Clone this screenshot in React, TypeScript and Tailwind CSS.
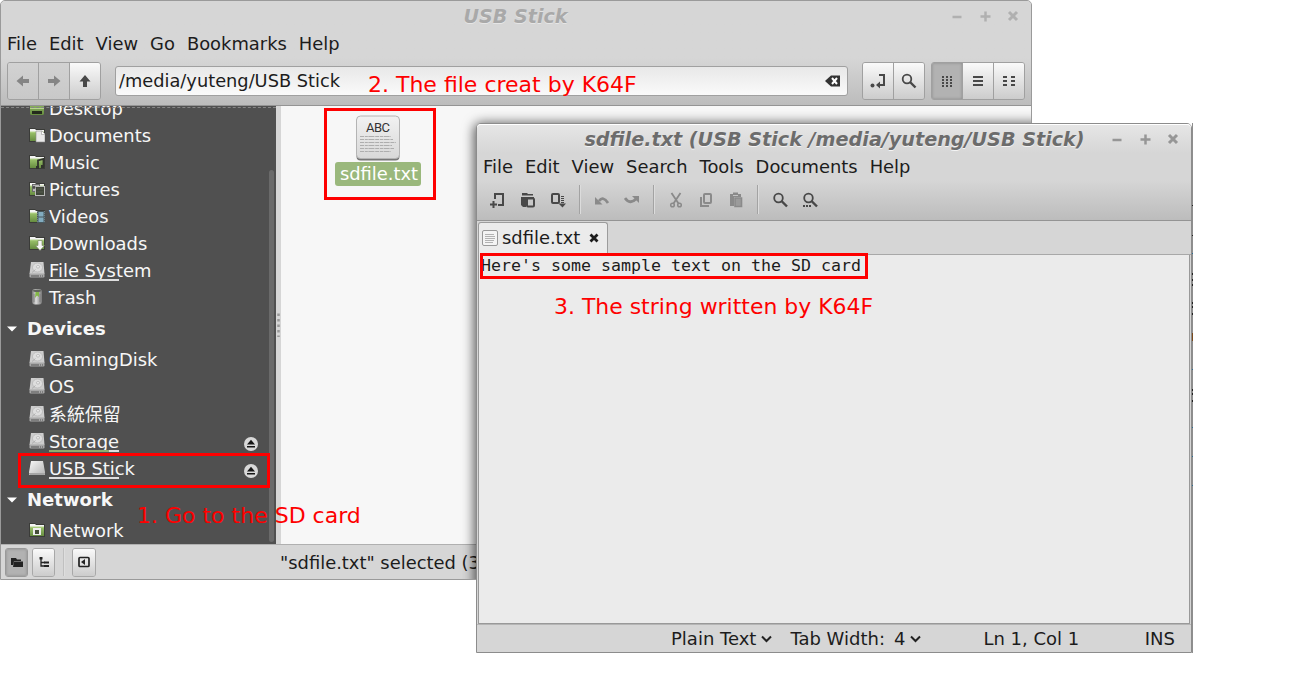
import React from "react";

type Kind = "desktop" | "documents" | "music" | "pictures" | "videos" | "downloads" | "disk" | "trash" | "usb" | "network";

function FolderBase() {
  return (
    <>
      <path d="M0 1h6l1 1h9v13H0z" fill="#3a3b38" />
      <path d="M1 2h5l1 1h8v2H1z" fill="#f4f4f4" />
      <path d="M1 5h14v9H1z" fill="url(#folderGreen)" />
      <path d="M1 5h14" stroke="#b6d48e" />
    </>
  );
}

function PlaceIcon({ kind }: { kind: Kind }) {
  const folder = !["disk", "trash", "usb", "desktop"].includes(kind);
  return (
    <svg width="16" height="16" viewBox="0 0 16 16" className="shrink-0">
      {folder && <FolderBase />}
      {kind === "desktop" && (
        <>
          <path d="M1 1h14v13l-1 1H2l-1-1z" fill="url(#folderGreen)" />
          <path d="M1 8h14v1H1z" fill="#b6d48e" />
          <path d="M3 11h10v3H3z" fill="#242b1c" />
        </>
      )}
      {kind === "documents" && (
        <>
          <path d="M7 4h6l3 3v8H7z" fill="#e9e9e9" stroke="#8b8b8b" strokeWidth=".6" />
          <path d="M12.500 4v3.500H16" fill="#fff" stroke="#999" strokeWidth=".6" />
        </>
      )}
      {kind === "music" && (
        <>
          <path d="M9 13.500V6.500l5.500-1.500v7.500" fill="none" stroke="#30332c" strokeWidth="1.800" />
          <path d="M7 12h3v3H7zM12 11h3v3h-3z" fill="#30332c" />
        </>
      )}
      {kind === "pictures" && (
        <>
          <rect x="3.500" y="3.500" width="7" height="7" fill="#b8b8b8" stroke="#6b6b6b" />
          <rect x="6.500" y="5.500" width="9" height="9" fill="#41473b" stroke="#b9b9b9" />
          <path d="M8 8h6M8 11h6" stroke="#565d50" />
          <circle cx="5" cy="6.500" r="1.400" fill="#4c4c4c" />
        </>
      )}
      {kind === "videos" && (
        <>
          <path d="M8 3h8v12H8z" fill="#49595f" />
          <path d="M9.500 4h5v4.500h-5zM9.500 9.500h5v4.500h-5z" fill="#82acc0" />
          <path d="M8.500 3v12M15.500 3v12" stroke="#8c999e" strokeWidth=".6" strokeDasharray="1 1" />
        </>
      )}
      {kind === "downloads" && (
        <path d="M9 5.500h4v5h2.500L11 15.500 6.500 10.500H9z" fill="#f6f6f6" stroke="#76845f" strokeWidth=".6" />
      )}
      {kind === "network" && (
        <>
          <rect x="4" y="6" width="8" height="7" fill="#ededed" />
          <rect x="6" y="8" width="4" height="4" fill="#434d36" />
        </>
      )}
      {kind === "disk" && (
        <>
          <path d="M2 0h12.500l1 12H.5z" fill="#cdcdcd" />
          <path d="M.5 11.500h15V15l-1 .5h-13l-1-.5z" fill="#a8a8a8" />
          <path d="M2 14h12" stroke="#565656" strokeDasharray="8 1 1 1" />
          <ellipse cx="8.500" cy="5.500" rx="5" ry="4.500" fill="#dedede" stroke="#b2b2b2" strokeWidth=".7" />
          <ellipse cx="9" cy="4.800" rx="1.600" ry="1.300" fill="#eee" stroke="#a6a6a6" strokeWidth=".6" />
          <path d="M3 10.500l3.500-3" stroke="#a8a8a8" strokeWidth=".8" />
        </>
      )}
      {kind === "usb" && (
        <>
          <path d="M2 1h12l2 11v3H0v-3z" fill="url(#usbGray)" />
          <path d="M0 13h16v1l-1 1H1l-1-1z" fill="#a5a5a5" />
        </>
      )}
      {kind === "trash" && (
        <>
          <rect x="3" y="0" width="10" height="15.500" rx="3" fill="url(#binGray)" />
          <ellipse cx="8" cy="1.800" rx="4" ry="1.200" fill="#61645e" />
          <path d="M6.500 3h3.500v5l-2-1.500L6 9z" fill="#83b747" />
          <path d="M5 5v8M11 5v8" stroke="#777" strokeWidth=".7" />
        </>
      )}
    </svg>
  );
}

function Eject() {
  return (
    <svg width="14" height="14" viewBox="0 0 14 14" className="mr-[18px] mt-[5px] shrink-0">
      <circle cx="7" cy="7" r="7" fill="#d9d9d9" />
      <path d="M7 2.800L11 7.500H3zM3 9h8v1.500H3z" fill="#161616" />
    </svg>
  );
}

function Place({ kind, label, use, eject, tall }: { kind: Kind; label: string; use?: "none" | "most"; eject?: boolean; tall?: boolean }) {
  return (
    <div className={`flex shrink-0 items-center pl-7 ${tall ? "h-7" : "h-[27px]"}`}>
      <div className="-mt-px flex"><PlaceIcon kind={kind} /></div>
      <div className="relative ml-1 flex-1 whitespace-nowrap leading-[27px]">
        {label}
        {use && (
          <div className="absolute bottom-[3px] left-0 flex h-[2px] w-[70px] bg-[#dedede]">
            {use === "most" && <div className="w-[60px] bg-[#8fad6c]" />}
          </div>
        )}
      </div>
      {eject && <Eject />}
    </div>
  );
}

function Section({ label }: { label: string }) {
  return (
    <div className="flex h-[35px] shrink-0 items-center pl-[6px] font-bold">
      <svg width="10" height="6" viewBox="0 0 10 6"><path d="M0 .5h10L5 5.500z" fill="#fff" /></svg>
      <span className="ml-[10px] text-[18px] leading-[35px]">{label}</span>
    </div>
  );
}

function WinControls({ color }: { color: string }) {
  return (
    <svg width="68" height="12" viewBox="0 0 68 12" fill="none" stroke={color} strokeWidth="2.500" className="-ml-px">
      <path d="M1.500 7h9M29.500 6.500h10M34.500 1.500v10" />
      <path d="M58 2l8 8M66 2l-8 8" strokeWidth="3" />
    </svg>
  );
}

function Btn({ children, active, dim, last }: { children: React.ReactNode; active?: boolean; dim?: boolean; last?: boolean }) {
  const face = active
    ? "bg-[#b2b2b2] shadow-[inset_0_0_3px_#888]"
    : dim
      ? "bg-linear-to-b from-[#d2d2d2] to-[#c8c8c8]"
      : "bg-linear-to-b from-[#fafafa] to-[#cccccc]";
  return (
    <div className={`flex flex-1 items-center justify-center ${face} ${last ? "" : "border-r border-[#a0a0a0]"}`}>
      <svg width="16" height="16" viewBox="0 0 16 16">{children}</svg>
    </div>
  );
}

function Menu({ items }: { items: string[] }) {
  return (
    <div className="flex h-7 items-center gap-3 pl-[6px] leading-7">
      {items.map((m) => <span key={m}>{m}</span>)}
    </div>
  );
}

function Tool({ children, dim }: { children: React.ReactNode; dim?: boolean }) {
  return (
    <div className="flex w-[30px] justify-center">
      <svg width="16" height="16" viewBox="0 0 16 16" fill="none" stroke={dim ? "#8a8a8a" : "#484848"} strokeWidth="2">{children}</svg>
    </div>
  );
}

function Sep() {
  return <div className="mx-[6px] h-[29px] w-[2px] border-l border-[#a3a3a3] bg-[#dcdcdc]" />;
}

function Chevron() {
  return <svg width="11" height="8" viewBox="0 0 11 8" className="ml-[5px]"><path d="M1 1.500l4.500 4.500L10 1.500" fill="none" stroke="#222" strokeWidth="2" /></svg>;
}

function FileManager() {
  return (
    <div className="absolute left-0 top-0 flex h-[580px] w-[1032px] flex-col overflow-hidden rounded-t-[5px] border border-[#9a9a9a] bg-[#d6d6d6] text-[#1c1c1c]">
      <div className="flex h-[105px] shrink-0 flex-col border-b border-[#949494] bg-linear-to-b from-[#d6d6d6] from-55% to-[#bcbcbc]">
        <div className="flex h-[29px] items-center">
          <div className="w-[75px]" />
          <div className="flex-1 pl-[3px] pt-[3px] text-center text-[19.150px] font-bold italic text-[#a9a9a9] [text-shadow:0_1px_0_#e6e6e6]">USB Stick</div>
          <div className="w-[79px]"><WinControls color="#b0b0b0" /></div>
        </div>
        <Menu items={["File", "Edit", "View", "Go", "Bookmarks", "Help"]} />
        <div className="flex items-center pl-[6px] pt-1">
          <div className="flex h-[38px] w-[94px] overflow-hidden rounded-[3px] border border-[#a0a0a0]">
            <Btn dim><path d="M1.500 8L8 2.500V6h6v4H8v3.500z" fill="#858585" /></Btn>
            <Btn dim><path d="M14.500 8L8 2.500V6H2v4h6v3.500z" fill="#858585" /></Btn>
            <Btn last><path d="M8 2L13.500 8.500H10V14H6V8.500H2.500z" fill="#484848" /></Btn>
          </div>
          <div className="ml-[14px] flex h-[30px] w-[733px] items-center rounded-[3px] border border-[#a0a0a0] bg-linear-to-b from-[#e8e8e8] to-[#fafafa] pl-[3px] pr-[6px]">
            <span className="flex-1 text-[17.800px]">/media/yuteng/USB Stick</span>
            <svg width="17" height="12" viewBox="0 0 17 12">
              <path d="M1 6l6-5.500h9v11H7z" fill="#333" />
              <path d="M8 3l5 6M13 3L8 9" stroke="#fff" strokeWidth="2" />
            </svg>
          </div>
          <div className="ml-[14px] flex h-[38px] w-[63px] overflow-hidden rounded-[3px] border border-[#a0a0a0]">
            <Btn>
              <path d="M9 2h5v10H8" fill="none" stroke="#484848" strokeWidth="2" />
              <path d="M10 8.500v7L6 12z" fill="#484848" />
              <circle cx="2.500" cy="12.500" r="2" fill="#484848" />
            </Btn>
            <Btn last>
              <circle cx="6" cy="6" r="4.300" fill="none" stroke="#484848" strokeWidth="1.800" />
              <path d="M9 9l5.500 5.500" stroke="#484848" strokeWidth="2.400" />
            </Btn>
          </div>
          <div className="ml-[6px] flex h-[38px] w-[94px] overflow-hidden rounded-[3px] border border-[#a0a0a0]">
            <Btn active>
              <path d="M3 4h10M3 7h10M3 10h10M3 13h10" stroke="#484848" strokeWidth="1.800" strokeDasharray="2 2" />
            </Btn>
            <Btn><path d="M3 4h10M3 8h10M3 12h10" stroke="#484848" strokeWidth="2" /></Btn>
            <Btn last>
              <path d="M2 4h4M2 8h4M2 12h4M10 4h4M10 8h4M10 12h4" stroke="#484848" strokeWidth="2" />
            </Btn>
          </div>
        </div>
      </div>

      <div className="flex h-[438px] shrink-0">
        <div className="relative flex w-[275px] flex-col overflow-hidden bg-[#505050] text-[#f7f7f7]">
          <div className="-mt-[11px] flex flex-col">
            <Place kind="desktop" label="Desktop" />
            <Place kind="documents" label="Documents" />
            <Place kind="music" label="Music" />
            <Place kind="pictures" label="Pictures" />
            <Place kind="videos" label="Videos" />
            <Place kind="downloads" label="Downloads" />
            <Place kind="disk" label="File System" use="none" />
            <Place kind="trash" label="Trash" />
            <Section label="Devices" />
            <Place kind="disk" label="GamingDisk" />
            <Place kind="disk" label="OS" />
            <Place kind="disk" label="系統保留" tall />
            <Place kind="disk" label="Storage" use="most" eject />
            <Place kind="usb" label="USB Stick" use="none" eject />
            <Section label="Network" />
            <Place kind="network" label="Network" />
          </div>
          <div className="absolute left-0 top-px w-full border-t border-dashed border-[#858585]" />
          <div className="absolute right-[2px] top-16 h-[372px] w-[5px] rounded-full bg-[#6a6a6a]" />
        </div>
        <div className="flex w-[5px] flex-col items-center justify-center bg-[#d6d6d6]">
          <svg width="3" height="24" viewBox="0 0 3 24"><path d="M1.500 .5v24" stroke="#999" strokeWidth="2.500" strokeDasharray="2.500 3" /></svg>
        </div>
        <div className="flex-1 bg-[#f7f7f7] pl-[54px] pt-[9px]">
          <div className="flex w-[86px] flex-col items-center">
            <svg width="46" height="47" viewBox="0 0 46 47">
              <rect x="1.500" y="2" width="43" height="43.500" rx="4" fill="#777" />
              <rect x="1.500" y="1" width="43" height="42.500" rx="4" fill="url(#paper)" stroke="#b4b4b4" />
              <text x="23" y="16.500" textAnchor="middle" fontSize="13" fontFamily="Roboto, sans-serif" textLength="24" fill="#333">ABC</text>
              <path d="M5 21.500h31M5 24.500h33M5 27.500h36M5 30.500h32M5 33.500h34M5 36.500h31" stroke="#aeaeae" strokeDasharray="4 .8 3 .6 6 .8" />
            </svg>
            <div className="h-6 w-[86px] rounded-[3px] bg-[#9ab87c] pl-[2px] text-center leading-[23px] text-white">sdfile.txt</div>
          </div>
        </div>
      </div>

      <div className="flex flex-1 items-center border-t border-[#b0b0b0] pl-1">
        <div className="flex h-[29px] w-[23px] overflow-hidden rounded-[3px] border border-[#999]">
          <Btn active last><path d="M2 4h5l1 1.500h4V7H5l-1 4H2zM5 7.500h9V13H4z" fill="#222" /></Btn>
        </div>
        <div className="ml-1 flex h-[29px] w-[23px] overflow-hidden rounded-[3px] border border-[#a8a8a8]">
          <Btn last>
            <path d="M5 3v9h4M5 8.500h4" fill="none" stroke="#222" strokeWidth="1.300" />
            <path d="M3.500 3h3v2.500h-3zM8 7.500h5v2H8zM8 11h5v2H8z" fill="#222" />
          </Btn>
        </div>
        <div className="ml-2 h-7 w-[2px] border-l border-[#c0c0c0] bg-[#dedede]" />
        <div className="ml-[7px] flex h-[29px] w-[24px] overflow-hidden rounded-[3px] border border-[#a8a8a8]">
          <Btn last>
            <rect x="3" y="3.500" width="10" height="9" rx="1" fill="none" stroke="#222" strokeWidth="1.700" />
            <path d="M9 5v6L5 8z" fill="#222" />
          </Btn>
        </div>
        <div className="ml-[184px] whitespace-nowrap pt-[2px]">"sdfile.txt" selected (39 bytes)</div>
      </div>
      <div className="absolute left-[475px] top-[124px] h-[600px] w-[715px] rounded-t-[5px] shadow-[0_0_12px_2px_rgba(0,0,0,0.65)]" />
    </div>
  );
}

function Editor() {
  return (
    <div className="absolute left-[476px] top-[123px] flex h-[530px] w-[717px] overflow-hidden text-[#1c1c1c]">
      <div className="flex w-[716px] shrink-0 flex-col rounded-t-[5px] border border-[#8c8c8c] bg-[#d6d6d6]">
        <div className="flex h-[97px] shrink-0 flex-col rounded-t-[4px] border-b border-[#949494] bg-[linear-gradient(#e6e6e6,#d6d6d6_30%,#d6d6d6_58%,#bcbcbc)] shadow-[inset_0_1px_0_#fff]">
          <div className="flex h-[29px] items-center">
            <div className="w-[75px]" />
            <div className="flex-1 whitespace-nowrap pl-[5px] pt-[3px] text-center text-[19.180px] font-bold italic text-[#6c6c6c] [text-shadow:0_1px_0_#f4f4f4]">sdfile.txt (USB Stick /media/yuteng/USB Stick)</div>
            <div className="w-[79px]"><WinControls color="#969696" /></div>
          </div>
          <Menu items={["File", "Edit", "View", "Search", "Tools", "Documents", "Help"]} />
          <div className="flex h-[37px] items-center pl-[6px]">
            <Tool><path d="M5 7V2h8v11H8M3.500 9v7M0 12.500h7" /></Tool>
            <Tool>
              <path d="M2 1h5l1 1h5v1.500H2zM1 5h13v3H6v7H3l-2-2z" fill="#484848" stroke="none" />
              <rect x="7" y="6.500" width="7" height="8" rx="1" fill="#c8c8c8" strokeWidth="2" />
            </Tool>
            <Tool><rect x="2" y="2" width="7" height="9" rx="1" /><path d="M12.500 4v8" strokeWidth="3" strokeDasharray="1 1" /><path d="M8.500 11.500h7.500l-3.500 4z" fill="#484848" stroke="none" /></Tool>
            <Sep />
            <Tool dim><path d="M5 9Q9 3.500 14 11" strokeWidth="2.800" /><path d="M1 5v7.500h7.500z" fill="#8a8a8a" stroke="none" /></Tool>
            <Tool dim><path d="M1 6Q6 13 12 7" strokeWidth="2.800" /><path d="M8 4h7v7z" fill="#8a8a8a" stroke="none" /></Tool>
            <Sep />
            <Tool dim><path d="M3.500 1l7 10.500M12.500 1l-7 10.500" strokeWidth="1.800" /><circle cx="4.500" cy="13" r="1.800" strokeWidth="1.500" /><circle cx="11.500" cy="13" r="1.800" strokeWidth="1.500" /></Tool>
            <Tool dim><rect x="6" y="2" width="7" height="9" rx="1" /><path d="M3 5v9h8" /></Tool>
            <Tool dim>
              <path d="M2 2h3V.5h5V2h3v3H6v9H2z" fill="#8a8a8a" stroke="none" />
              <path d="M5 3.500h5" stroke="#c4c4c4" strokeWidth="1" />
              <path d="M7 6h6.500v8.500H7z" fill="#9b9b9b" strokeWidth="1.600" />
            </Tool>
            <Sep />
            <Tool><circle cx="6.500" cy="6" r="4.300" strokeWidth="1.800" /><path d="M9.500 9l5.500 5.500" strokeWidth="2.400" /></Tool>
            <Tool><circle cx="6.500" cy="6" r="4.300" strokeWidth="1.800" /><path d="M9.500 9l5.500 5.500" strokeWidth="2.400" /><path d="M1 14h9" strokeDasharray="2 1" /></Tool>
          </div>
        </div>
        <div className="flex h-[34px] shrink-0 items-end pl-px">
          <div className="flex h-[33px] w-[130px] items-center rounded-t-[3px] border border-b-0 border-[#9c9c9c] bg-[#ebebeb] pb-[2px] pl-[3px]">
            <svg width="16" height="16" viewBox="0 0 16 16">
              <rect x=".5" y=".5" width="15" height="15" rx="1.500" fill="#f4f4f4" stroke="#999" />
              <path d="M3 4.500h9M3 6.500h10M3 8.500h10M3 10.500h9M3 12.500h8" stroke="#aaa" strokeWidth=".9" />
            </svg>
            <span className="ml-1">sdfile.txt</span>
            <svg width="10" height="10" viewBox="0 0 10 10" className="ml-[9px]"><path d="M1.500 1.500l7 7M8.500 1.500l-7 7" stroke="#1c1c1c" strokeWidth="2.800" /></svg>
          </div>
          <div className="h-px flex-1 bg-[#a8a8a8]" />
        </div>
        <div className="mx-px h-[369px] shrink-0 border border-t-0 border-[#999] bg-[#ebebeb] pl-[2px] font-['DejaVu_Sans_Mono',monospace] text-[16.610px] leading-[22px]">
          Here's some sample text on the SD card
        </div>
        <div className="flex flex-1 items-center border-t border-[#b5b5b5] pl-[194px] text-[18px] leading-6">
          <span>Plain Text</span><Chevron />
          <span className="ml-[18px]">Tab Width:</span><span className="ml-[9px]">4</span><Chevron />
          <span className="ml-[62px]">Ln 1, Col 1</span>
          <span className="ml-auto mr-[16px]">INS</span>
        </div>
      </div>
      <svg width="1" height="530" viewBox="0 0 1 530" className="bg-[#8e8e8e]">
        <path d="M0 82h1v1H0zM0 112h1v1H0zM0 150h1v2H0zM0 156h1v2H0zM0 161h1v2H0zM0 179h1v2H0zM0 183h1v2H0zM0 190h1v2H0zM0 266h1v2H0zM0 270h1v2H0zM0 277h1v2H0z" fill="#222" />
        <path d="M0 130h1v1H0zM0 246h1v1H0zM0 304h1v1H0zM0 333h1v1H0zM0 362h1v1H0z" fill="#2b6c94" />
        <path d="M0 210h1v8H0z" fill="#7a4a1c" />
      </svg>
    </div>
  );
}

export default function App() {
  return (
    <div className="relative h-[680px] w-[1299px] overflow-hidden bg-white font-['DejaVu_Sans','Noto_Sans_CJK_TC',sans-serif] text-[17.900px]">
      <svg width="0" height="0" className="absolute">
        <defs>
          <linearGradient id="folderGreen" x1="0" y1="0" x2="0" y2="1"><stop stopColor="#9cc46c" /><stop offset="1" stopColor="#668c40" /></linearGradient>
          <linearGradient id="usbGray" x1="0" y1="0" x2="1" y2="1"><stop stopColor="#f8f8f8" /><stop offset="1" stopColor="#b4b4b4" /></linearGradient>
          <linearGradient id="binGray"><stop stopColor="#777" /><stop offset=".4" stopColor="#ddd" /><stop offset="1" stopColor="#777" /></linearGradient>
          <linearGradient id="paper" x1="0" y1="0" x2="0" y2="1"><stop stopColor="#f2f2f2" /><stop offset="1" stopColor="#d8d8d8" /></linearGradient>
        </defs>
      </svg>
      <FileManager />
      <Editor />
      <div className="absolute left-[324px] top-[108px] h-[92px] w-[112px] border-3 border-[#fe0000]" />
      <div className="absolute left-[18px] top-[453px] h-[35px] w-[252px] border-3 border-[#fe0000]" />
      <div className="absolute left-[480px] top-[253px] h-[26px] w-[388px] border-3 border-[#fe0000]" />
      <div className="absolute left-[137px] top-[502px] whitespace-nowrap text-[22px] leading-7 text-[#fe0000]">1. Go to the SD card</div>
      <div className="absolute left-[368px] top-[71px] whitespace-nowrap text-[22px] leading-7 text-[#fe0000]">2. The file creat by K64F</div>
      <div className="absolute left-[554px] top-[293px] whitespace-nowrap text-[21.950px] leading-7 text-[#fe0000]">3. The string written by K64F</div>
    </div>
  );
}
